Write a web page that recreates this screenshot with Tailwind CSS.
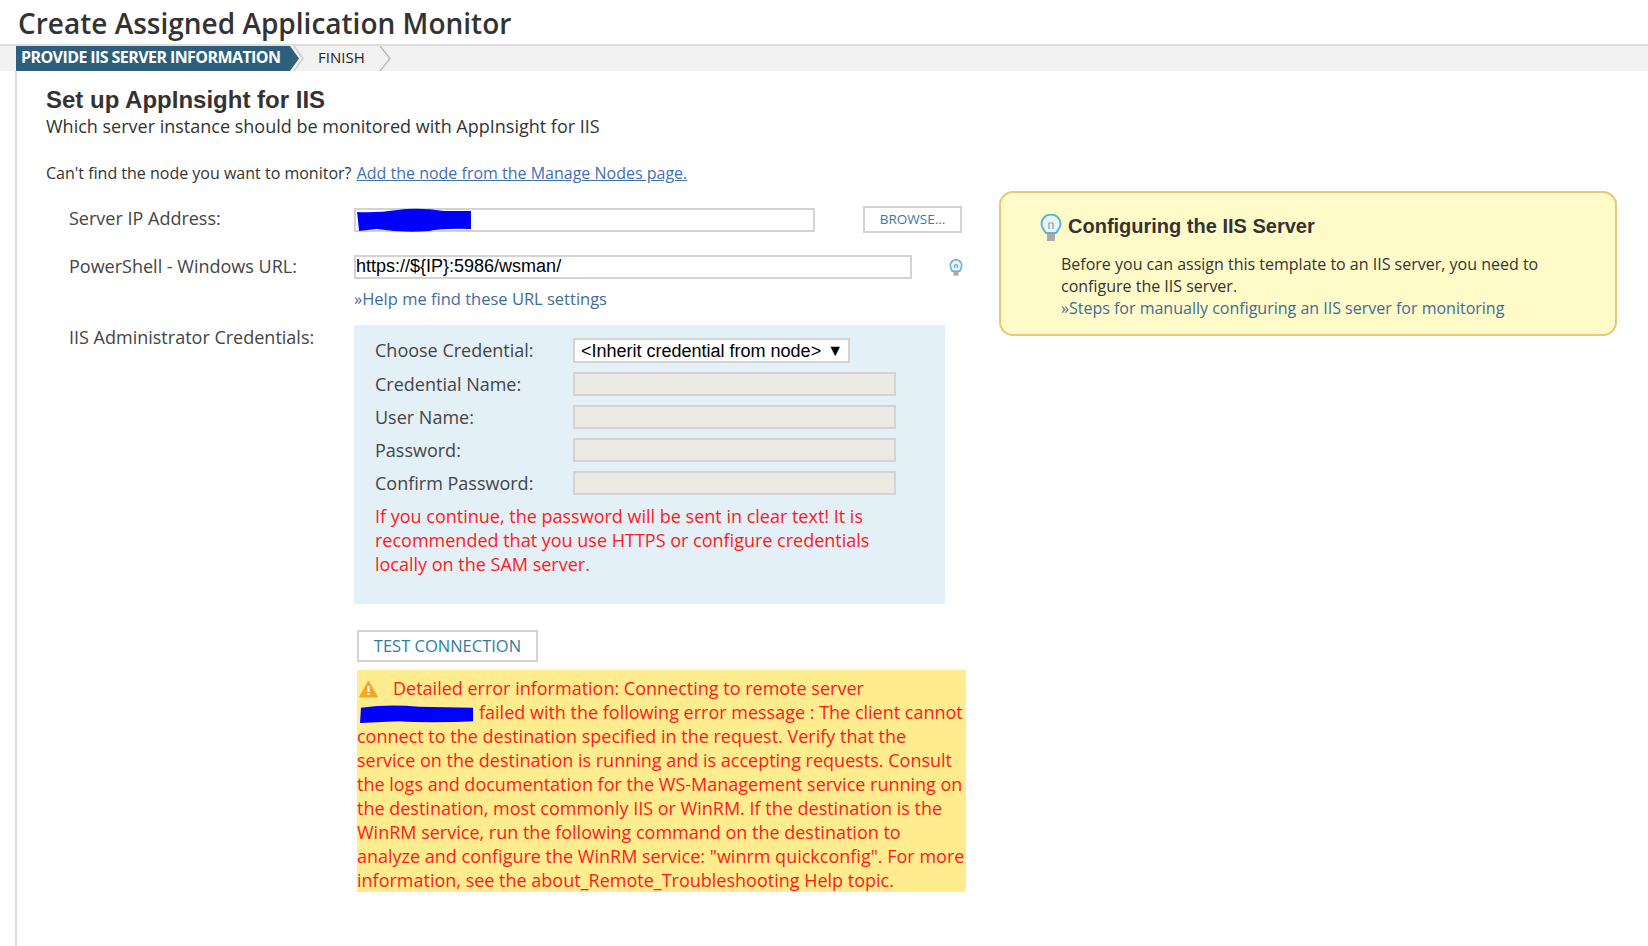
<!DOCTYPE html>
<html lang="en">
<head>
    <meta charset="UTF-8">
    <title>Create Assigned Application Monitor</title>
    <script src="https://cdn.jsdelivr.net/npm/@tailwindcss/browser@4"></script>
</head>
<body class="bg-white h-[946px] overflow-hidden flex flex-col font-['Open_Sans',sans-serif] text-[#333]">
    <h1 class="pl-[18px] h-[44px] leading-[46px] text-[28px] font-semibold text-[#333]">Create Assigned Application Monitor</h1>

    <!-- wizard steps -->
    <div class="h-[27px] bg-[#f2f2f2] border-t-2 border-[#ddd] flex">
        <div class="ml-[16px] w-[274px] h-[25px] bg-[#2d5f7c] pl-[5px] leading-[23px] text-[16px] tracking-[-0.58px] font-bold text-white whitespace-nowrap">PROVIDE IIS SERVER INFORMATION</div>
        <svg class="w-[16px] h-[25px] shrink-0" viewBox="0 0 16 25"><path d="M0 0 L9 12.5 L0 25 Z" fill="#2d5f7c"/><path d="M4 0 L13 12.5 L4 25" fill="none" stroke="#ccc" stroke-width="1.5"/></svg>
        <div class="ml-[12px] w-[61px] leading-[23px] text-[15px] text-[#222]">FINISH</div>
        <svg class="w-[14px] h-[25px] shrink-0" viewBox="0 0 14 25"><path d="M1 0 L11 12.5 L1 25" fill="none" stroke="#bbb" stroke-width="1.5"/></svg>
    </div>

    <div class="flex-1 ml-[15px] border-l-2 border-[#ddd] pl-[29px] flex">
        <div class="w-[925px] shrink-0">
            <h2 class="mt-[14px] h-[29px] leading-[30px] font-['Liberation_Sans',sans-serif] text-[24px] font-bold text-[#333]">Set up AppInsight for IIS</h2>
            <p class="h-[24px] leading-[24px] text-[18px]">Which server instance should be monitored with AppInsight for IIS</p>
            <p class="mt-[23px] h-[24px] leading-[24px] text-[16px]">Can't find the node you want to monitor? <a class="ml-[1px] text-[#3f6fb5] underline">Add the node from the Manage Nodes page.</a></p>

            <div class="mt-[21px] flex h-[27px] items-center">
                <label class="w-[308px] shrink-0 pl-[23px] -mt-[2px] text-[18px] text-[#444]">Server IP Address:</label>
                <div class="relative w-[461px] h-[24px] border-2 border-[#d3d3d3]">
                    <svg class="absolute left-0 -top-[2px] w-[116px] h-[25px]" viewBox="0 0 112 25" preserveAspectRatio="none"><path d="M1 4 Q20 5 40 2 Q60 -1 85 3 L111 3 L111 21 Q85 20 70 23 Q45 25 20 21 L3 23 Z" fill="#0000ff"/></svg>
                </div>
                <button class="ml-[48px] w-[99px] h-[27px] border-2 border-[#d3d3d3] text-[13.5px] text-[#3a7a9c]">BROWSE...</button>
            </div>

            <div class="mt-[21px] flex h-[24px] items-center">
                <label class="w-[308px] shrink-0 pl-[23px] text-[18px] text-[#444]">PowerShell - Windows URL:</label>
                <input class="mt-[1px] w-[558px] h-[24px] border-2 border-[#d3d3d3] px-0 font-['Liberation_Sans',sans-serif] text-[18px] text-black" value="https://${IP}:5986/wsman/">
                <svg class="ml-[37px] mt-[3px] w-[14px] h-[18px]" viewBox="0 0 22 28"><path d="M5 19 C3 15 2 13 2 10 A9 9 0 0 1 20 10 C20 13 19 15 17 19 Z" fill="#e4f4fa" stroke="#5ab4d6" stroke-width="2.4"/><path d="M9 14 V9 H13 V14" fill="none" stroke="#888" stroke-width="1.5"/><rect x="7" y="20" width="8" height="6" fill="#aaa"/></svg>
            </div>

            <p class="ml-[308px] mt-[9px] h-[24px] leading-[24px] text-[16.5px] text-[#3f6b9c]">»Help me find these URL settings</p>

            <div class="mt-[14px] flex">
                <label class="w-[308px] shrink-0 pl-[23px] h-[24px] leading-[24px] text-[18px] text-[#444]">IIS Administrator Credentials:</label>
                <div class="w-[591px] h-[279px] bg-[#e3f0f8] pl-[21px] pt-[13px] text-[18px] text-[#444]">
                    <div class="flex items-center h-[25px]">
                        <span class="w-[198px]">Choose Credential:</span>
                        <div class="w-[277px] h-[25px] bg-white border-2 border-[#d3d3d3] pl-[6px] pt-[1px] flex items-center font-['Liberation_Sans',sans-serif] text-[18px] text-black whitespace-nowrap">&lt;Inherit credential from node&gt;<span class="ml-[6px] text-[16px]">▼</span></div>
                    </div>
                    <div class="mt-[9px] flex items-center h-[24px]">
                        <span class="w-[198px]">Credential Name:</span>
                        <div class="w-[323px] h-[24px] bg-[#eaeae2] border-2 border-[#d3d3d3]"></div>
                    </div>
                    <div class="mt-[9px] flex items-center h-[24px]">
                        <span class="w-[198px]">User Name:</span>
                        <div class="w-[323px] h-[24px] bg-[#eaeae2] border-2 border-[#d3d3d3]"></div>
                    </div>
                    <div class="mt-[9px] flex items-center h-[24px]">
                        <span class="w-[198px]">Password:</span>
                        <div class="w-[323px] h-[24px] bg-[#eaeae2] border-2 border-[#d3d3d3]"></div>
                    </div>
                    <div class="mt-[9px] flex items-center h-[24px]">
                        <span class="w-[198px]">Confirm Password:</span>
                        <div class="w-[323px] h-[24px] bg-[#eaeae2] border-2 border-[#d3d3d3]"></div>
                    </div>
                    <p class="mt-[9px] leading-[24px] text-[18px] text-[#ff1a1a] whitespace-nowrap">If you continue, the password will be sent in clear text! It is<br>recommended that you use HTTPS or configure credentials<br>locally on the SAM server.</p>
                </div>
            </div>

            <button class="ml-[311px] mt-[26px] block w-[181px] h-[32px] border-2 border-[#d3d3d3] text-[16.5px] text-[#2f7ca3]">TEST CONNECTION</button>

            <div class="ml-[311px] mt-[8px] w-[609px] h-[222px] bg-[#ffec8f] pt-[6px] leading-[24px] text-[18px] text-[#ff1a1a] whitespace-nowrap">
                <svg class="inline-block ml-[2px] mr-[15px] -mt-[3px] w-[19px] h-[18px] align-middle" viewBox="0 0 19 18"><path d="M9.5 1 L18.5 17 L0.5 17 Z" fill="#f5a623" stroke="#f5a623" stroke-linejoin="round"/><rect x="8.5" y="6" width="2" height="6" fill="#fff"/><rect x="8.5" y="13" width="2" height="2" fill="#fff"/></svg>Detailed error information: Connecting to remote server<br>
                <svg class="inline-block ml-[2px] mr-[5px] w-[115px] h-[20px] -my-[4px] align-middle" viewBox="0 0 115 22" preserveAspectRatio="none"><path d="M2 4 Q30 0 60 3 L114 4 L114 19 Q70 21 40 19 L1 21 Z" fill="#0000ff"/></svg>failed with the following error message : The client cannot<br>
                connect to the destination specified in the request. Verify that the<br>
                service on the destination is running and is accepting requests. Consult<br>
                the logs and documentation for the WS-Management service running on<br>
                the destination, most commonly IIS or WinRM. If the destination is the<br>
                WinRM service, run the following command on the destination to<br>
                analyze and configure the WinRM service: "winrm quickconfig". For more<br>
                information, see the about_Remote_Troubleshooting Help topic.
            </div>
        </div>

        <!-- help card -->
        <div class="ml-[28px] mt-[120px] w-[618px] h-[145px] bg-[#fffbc8] border-2 border-[#e8c878] rounded-[14px] pl-[60px] pt-[20px]">
            <div class="flex items-center h-[30px] -ml-[21px]">
                <svg class="w-[22px] h-[29px]" viewBox="0 0 22 29"><path d="M6 19 C3 15 1.5 13 1.5 10 A9.5 9.5 0 0 1 20.5 10 C20.5 13 19 15 16 19 Z" fill="#e8f6fb" stroke="#5ab4d6" stroke-width="2"/><path d="M9 15 V9 H13 V15" fill="none" stroke="#999" stroke-width="1.2"/><rect x="7" y="20" width="8" height="7" fill="#aaa"/></svg>
                <h3 class="ml-[6px] -mt-[4px] font-['Liberation_Sans',sans-serif] text-[20px] font-bold text-[#333]">Configuring the IIS Server</h3>
            </div>
            <p class="mt-[10px] leading-[22px] text-[16px] text-[#333] whitespace-nowrap">Before you can assign this template to an IIS server, you need to<br>configure the IIS server.<br><a class="text-[#3f6b9c]">»Steps for manually configuring an IIS server for monitoring</a></p>
        </div>
    </div>
</body>
</html>
